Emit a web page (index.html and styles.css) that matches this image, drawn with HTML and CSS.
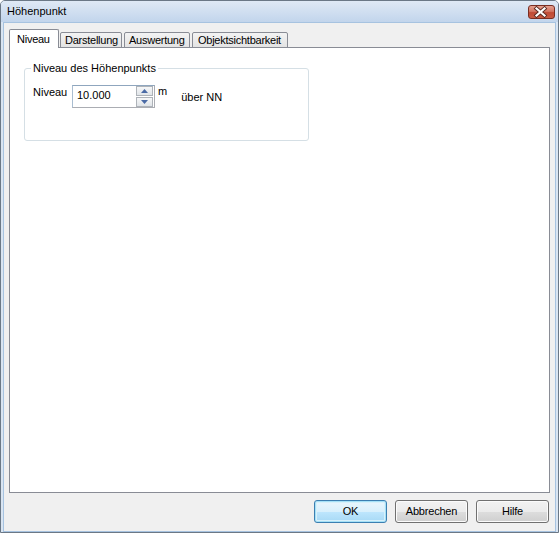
FILE: index.html
```html
<!DOCTYPE html>
<html lang="de">
<head>
<meta charset="utf-8">
<title>Höhenpunkt</title>
<link rel="stylesheet" href="styles.css">
</head>
<body>
<div class="window">
  <div class="titlebar">
    <span class="title">Höhenpunkt</span>
    <div class="close">
      <svg width="27" height="14" viewBox="0 0 27 14">
        <path d="M9.5 3.5 L17.5 10.5 M17.5 3.5 L9.5 10.5" stroke="#5a2a22" stroke-width="4" stroke-linecap="square"/>
        <path d="M9.5 3.5 L17.5 10.5 M17.5 3.5 L9.5 10.5" stroke="#ffffff" stroke-width="2.2" stroke-linecap="square"/>
      </svg>
    </div>
  </div>
  <div class="client">
    <div class="tabs">
      <div class="tab active">Niveau</div>
      <div class="tab t-dar">Darstellung</div>
      <div class="tab t-aus">Auswertung</div>
      <div class="tab t-obj">Objektsichtbarkeit</div>
    </div>
    <div class="panel">
      <div class="group">
        <span class="legend">Niveau des Höhenpunkts</span>
        <div class="row">
          <span class="label">Niveau</span>
          <div class="spinbox">
            <span class="value">10.000</span>
            <div class="spin">
              <div class="sbtn up"><svg width="7" height="4" viewBox="0 0 7 4"><path d="M0 4 L3.5 0 L7 4 Z" fill="#4a6aa5"/></svg></div>
              <div class="sbtn down"><svg width="7" height="4" viewBox="0 0 7 4"><path d="M0 0 L3.5 4 L7 0 Z" fill="#4a6aa5"/></svg></div>
            </div>
          </div>
          <span class="unit">m</span>
          <span class="nn">über NN</span>
        </div>
      </div>
    </div>
    <div class="buttons">
      <div class="btn default">OK</div>
      <div class="btn">Abbrechen</div>
      <div class="btn">Hilfe</div>
    </div>
  </div>
</div>
</body>
</html>
```
FILE: styles.css
```css
html, body {
  margin: 0;
  padding: 0;
  background: #ffffff;
}
body {
  font-family: "Liberation Sans", Arial, sans-serif;
  font-size: 11px;
  line-height: 13px;
  color: #000;
}
.window {
  width: 559px;
  height: 533px;
  box-sizing: border-box;
  border: 1px solid #6b7886;
  border-radius: 5px 5px 0 0;
  background: #d9e5f2;
  padding: 0 2px;
  display: flex;
  flex-direction: column;
}
.titlebar {
  height: 21px;
  margin: 0 -2px;
  display: flex;
  align-items: flex-start;
  background: linear-gradient(#dfe9f5, #c2d5ec);
  border-radius: 4px 4px 0 0;
}
.title {
  padding-left: 6px;
  margin-top: 4px;
  font-size: 11px;
}
.close {
  margin-left: auto;
  margin-right: 3px;
  margin-top: 4px;
  width: 27px;
  height: 14px;
  box-sizing: border-box;
  border: 1px solid #7a2e22;
  border-radius: 3px;
  background: linear-gradient(#e5a090 0%, #d27562 45%, #c04a35 55%, #c85a42 100%);
  display: flex;
  align-items: center;
  justify-content: center;
}
.close svg {
  display: block;
  margin-left: -2px;
  margin-top: -1px;
}
.client {
  flex: 1;
  background: #f0f0f0;
  border: 1px solid #a7c3e0;
  padding: 6px 5px 8px 5px;
  display: flex;
  flex-direction: column;
}
.tabs {
  height: 19px;
  margin-bottom: -1px;
  display: flex;
  align-items: flex-end;
  position: relative;
  z-index: 1;
}
.tab {
  height: 16px;
  box-sizing: border-box;
  border: 1px solid #898c95;
  border-radius: 2px 2px 0 0;
  background: linear-gradient(#f3f3f3, #e3e3e3);
  padding: 1px 0 0 4px;
  white-space: nowrap;
  margin-left: 1px;
  letter-spacing: -0.25px;
}
.tab.active {
  height: 19px;
  width: 50px;
  margin-left: 0;
  background: #ffffff;
  border-bottom: none;
  padding: 3px 0 0 7px;
}
.t-dar { width: 62px; }
.t-aus { width: 66px; margin-left: 2px; }
.t-obj { width: 96px; margin-left: 2px; padding-left: 5px; }
.panel {
  height: 446px;
  box-sizing: border-box;
  border: 1px solid #898c95;
  background: #ffffff;
  padding: 20px 0 0 14px;
}
.group {
  position: relative;
  width: 285px;
  height: 73px;
  box-sizing: border-box;
  border: 1px solid #d5dfe5;
  border-radius: 3px;
  padding: 16px 0 0 8px;
}
.legend {
  position: absolute;
  top: -7px;
  left: 6px;
  padding: 0 2px;
  background: #ffffff;
}
.row {
  display: flex;
  align-items: flex-start;
}
.label {
  width: 39px;
  margin-top: 1px;
}
.spinbox {
  width: 83px;
  height: 23px;
  box-sizing: border-box;
  border: 1px solid #abadb3;
  border-top-color: #8fa6be;
  border-left-color: #a9bdd1;
  display: flex;
  align-items: flex-start;
  background: #fff;
}
.value {
  flex: 1;
  padding: 3px 0 0 4px;
}
.spin {
  width: 17px;
  margin: 0 1px 0 0;
  display: flex;
  flex-direction: column;
  gap: 1px;
}
.sbtn {
  height: 10px;
  box-sizing: border-box;
  border: 1px solid #aeb3b9;
  background: linear-gradient(#f6f7f8, #e0e4e8);
  display: flex;
  align-items: center;
  justify-content: center;
}
.unit {
  margin-left: 3px;
}
.nn {
  margin-left: 14px;
  margin-top: 6px;
}
.buttons {
  margin-top: 7px;
  height: 23px;
  display: flex;
  justify-content: flex-end;
  gap: 8px;
  padding-right: 1px;
}
.btn {
  width: 73px;
  height: 23px;
  box-sizing: border-box;
  border: 1px solid #707070;
  border-radius: 3px;
  background: linear-gradient(#f2f2f2 0%, #ebebeb 50%, #dddddd 51%, #cfcfcf 100%);
  box-shadow: inset 0 0 0 1px #fbfbfb;
  display: flex;
  align-items: center;
  justify-content: center;
  font-size: 11px;
  letter-spacing: -0.2px;
}
.btn.default {
  border-color: #3c7fb1;
  box-shadow: inset 0 0 0 1px #a6e1f7, inset 0 0 0 2px #d8f0fa;
  background: linear-gradient(#eaf6fd 0%, #d9f0fc 50%, #bee6fd 51%, #a7d9f5 100%);
}
```
